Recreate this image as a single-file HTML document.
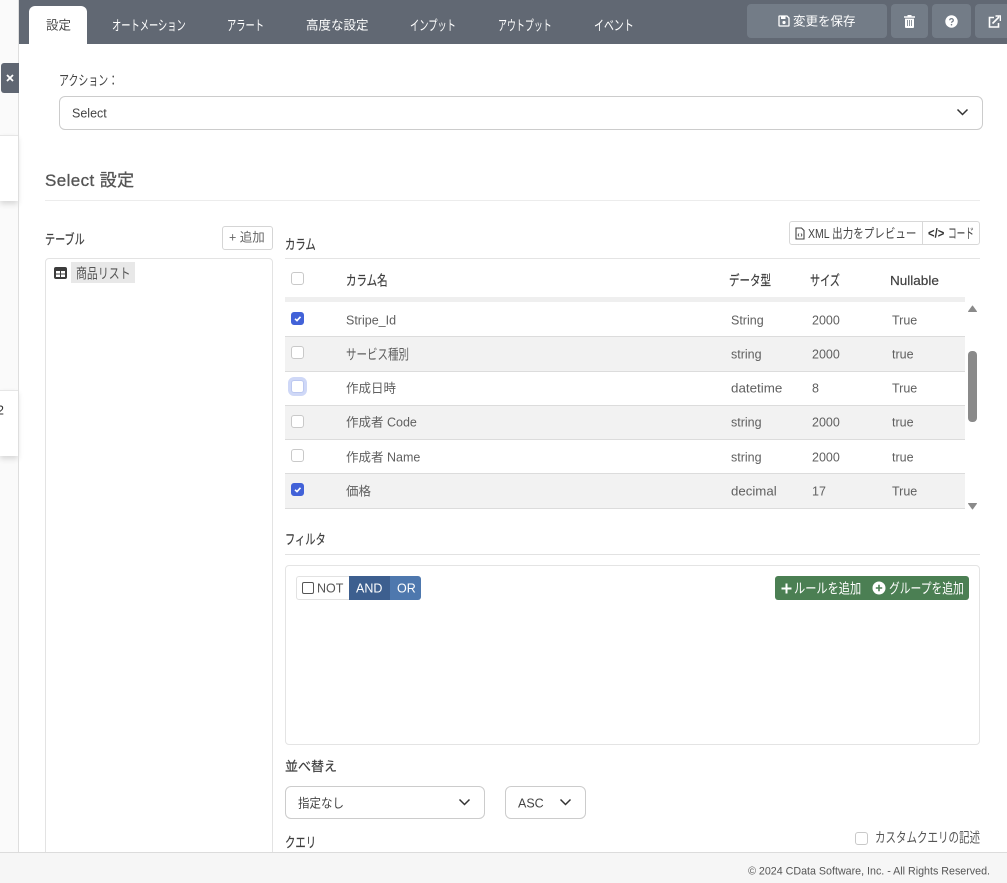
<!DOCTYPE html>
<html lang="ja"><head><meta charset="utf-8"><title>設定</title>
<style>
html,body{margin:0;padding:0;width:1007px;height:883px;overflow:hidden;background:#fff}
body{position:relative;font-family:"Liberation Sans","Noto Sans CJK JP",sans-serif;font-size:12.5px;color:#4a4a4a}
.a{position:absolute;box-sizing:border-box}
.t{position:absolute;white-space:nowrap;transform:translateY(calc(-50% + 1px)) scaleX(var(--s,1));transform-origin:0 50%;line-height:1.2}
.k{font-size:14px}
.tab{color:#fff;top:25px}
.cb{position:absolute;left:291px;width:13px;height:13px;box-sizing:border-box;border:1px solid #c9c9c9;border-radius:3px;background:#fff}
.cb.on{background:#4262d8;border-color:#4262d8}
.cb.on svg{position:absolute;left:0;top:0}
.row{position:absolute;left:285px;width:680px;box-sizing:border-box;border-bottom:1px solid #dcdcdc}
.g{background:#f2f2f2}
.sel{position:absolute;box-sizing:border-box;border:1px solid #ccc;border-radius:6px;background:#fff}
.h{color:#3f3f3f;-webkit-text-stroke:.2px #3f3f3f}
.d{color:#606060}
</style></head><body>
<!-- left strip -->
<div class="a" style="left:0;top:0;width:18px;height:883px;background:#fafafa"></div>
<div class="a" style="left:0;top:135px;width:18px;height:66px;background:#fff;box-shadow:0 3px 6px rgba(0,0,0,.14)"></div>
<div class="a" style="left:0;top:390px;width:18px;height:66px;background:#fff;box-shadow:0 3px 6px rgba(0,0,0,.14)"></div>
<div class="a" style="left:0;top:135px;width:18px;height:1px;background:#e6e6e6"></div>
<div class="a" style="left:0;top:390px;width:18px;height:1px;background:#e6e6e6"></div>
<span class="t" style="left:-3px;top:410px;color:#333">2</span>
<div class="a" style="left:18px;top:0;width:1px;height:883px;background:#dedede"></div>
<div class="a" style="left:1px;top:63px;width:18px;height:30px;background:#5f6672;border-radius:3px 0 0 3px"></div>
<svg class="a" style="left:6px;top:74px" width="8" height="8" viewBox="0 0 8 8"><path d="M1 1L7 7M7 1L1 7" stroke="#fff" stroke-width="1.800"/></svg>

<!-- top bar -->
<div class="a" style="left:19px;top:0;width:988px;height:44px;background:#616873"></div>
<div class="a" style="left:29px;top:6px;width:58px;height:38px;background:#fff;border-radius:6px 6px 0 0"></div>
<span class="t tab" style="left:46px;color:#4a4a4a">設定</span>
<span class="t tab k" style="left:112px;--s:.66">オートメーション</span>
<span class="t tab k" style="left:227px;--s:.66">アラート</span>
<span class="t tab" style="left:306px">高度な設定</span>
<span class="t tab k" style="left:410px;--s:.66">インプット</span>
<span class="t tab k" style="left:498px;--s:.64">アウトプット</span>
<span class="t tab k" style="left:594px;--s:.71">イベント</span>

<div class="a" style="left:747px;top:4px;width:140px;height:34px;background:#737c87;border-radius:4px"></div>
<div class="a" style="left:891px;top:4px;width:37px;height:34px;background:#737c87;border-radius:4px"></div>
<div class="a" style="left:932px;top:4px;width:39px;height:34px;background:#737c87;border-radius:4px"></div>
<div class="a" style="left:975px;top:4px;width:40px;height:34px;background:#737c87;border-radius:4px"></div>
<svg class="a" style="left:778px;top:15px" width="12" height="12" viewBox="0 0 12 12"><path d="M1.500 1h7.500l2 2v7.500a.5.5 0 0 1-.5.5h-9a.5.5 0 0 1-.5-.5V1.500A.5.5 0 0 1 1.500 1z" fill="none" stroke="#fff" stroke-width="1.300"/><rect x="3" y="1.500" width="4.500" height="2.500" fill="#fff"/><circle cx="6" cy="7.500" r="1.600" fill="#fff"/></svg>
<span class="t" style="left:793px;top:21px;color:#fff">変更を保存</span>
<svg class="a" style="left:903px;top:14px" width="13" height="14" viewBox="0 0 13 14"><path d="M1 2.200h11v1.600H1zM4.500 2.200V1h4v1.200" fill="#fff"/><path d="M2 4.600h9V13a1 1 0 0 1-1 1H3a1 1 0 0 1-1-1z" fill="#fff"/><path d="M4.500 6v6M6.500 6v6M8.500 6v6" stroke="#737c87" stroke-width=".8"/></svg>
<svg class="a" style="left:945px;top:15px" width="13" height="13" viewBox="0 0 13 13"><circle cx="6.500" cy="6.500" r="6.200" fill="#fff"/><path d="M4.700 5.200a1.800 1.600 0 1 1 2.700 1.400c-.6.4-.9.6-.9 1.200" fill="none" stroke="#737c87" stroke-width="1.300"/><circle cx="6.500" cy="9.700" r=".8" fill="#737c87"/></svg>
<svg class="a" style="left:988px;top:15px" width="13" height="13" viewBox="0 0 13 13"><path d="M6 2.500H1.500v9.500h9V8" fill="none" stroke="#fff" stroke-width="1.600"/><path d="M4.500 8.500L11 2M7.500 1h5v5" fill="none" stroke="#fff" stroke-width="1.600"/></svg>

<!-- action -->
<span class="t k" style="left:59px;top:80px;color:#444;--s:.71">アクション：</span>
<div class="sel" style="left:59px;top:96px;width:924px;height:34px"></div>
<span class="t" style="left:72px;top:113px;color:#444">Select</span>
<svg class="a" style="left:956px;top:108px" width="13" height="9" viewBox="0 0 13 9"><path d="M1.500 1.500L6.500 6.500L11.500 1.500" fill="none" stroke="#333" stroke-width="1.500"/></svg>

<span class="t" style="left:45px;top:180px;font-size:17px;color:#555;letter-spacing:.4px;-webkit-text-stroke:.3px #555">Select 設定</span>
<div class="a" style="left:45px;top:200px;width:935px;height:1px;background:#ececec"></div>

<!-- table panel -->
<span class="t h k" style="left:45px;top:239px;--s:.72">テーブル</span>
<div class="a" style="left:222px;top:226px;width:51px;height:24px;border:1px solid #d5d5d5;border-radius:3px;background:#fff"></div>
<span class="t" style="left:229px;top:237px;color:#666">+ 追加</span>
<div class="a" style="left:45px;top:258px;width:228px;height:640px;border:1px solid #e3e3e3;border-radius:4px;background:#fff"></div>
<svg class="a" style="left:54px;top:267px" width="13" height="12" viewBox="0 0 13 12"><rect width="13" height="12" rx="2" fill="#3c3c3c"/><path d="M2 4h4v2.500H2zM7 4h4v2.500H7zM2 7.500h4V10H2zM7 7.500h4V10H7z" fill="#fff"/></svg>
<div class="a" style="left:71px;top:262px;width:64px;height:21px;background:#e8e8e8"></div>
<span class="t k" style="left:76px;top:273px;color:#555;--s:.78">商品リスト</span>

<!-- columns -->
<span class="t h k" style="left:285px;top:244px;--s:.74">カラム</span>
<div class="a" style="left:789px;top:221px;width:191px;height:24px;border:1px solid #d8d8d8;border-radius:3px;background:#fff"></div>
<div class="a" style="left:922px;top:222px;width:1px;height:22px;background:#d8d8d8"></div>
<svg class="a" style="left:795px;top:227px" width="10" height="13" viewBox="0 0 10 13"><path d="M1 1h5.500L9 3.500V12H1z" fill="none" stroke="#444" stroke-width="1.100"/><path d="M4 6.500L3 8l1 1.500M6 6.500L7 8l-1 1.500" fill="none" stroke="#444" stroke-width=".8"/></svg>
<span class="t" style="left:808px;top:233px;color:#444;font-size:13px;--s:.81">XML 出力をプレビュー</span>
<span class="t" style="left:928px;top:233px;color:#333;font-weight:bold;--s:.9">&lt;/&gt;</span>
<span class="t k" style="left:948px;top:233px;color:#444;--s:.62">コード</span>
<div class="a" style="left:285px;top:258px;width:695px;height:1px;background:#e4e4e4"></div>

<div class="cb" style="top:272px"></div>
<span class="t h k" style="left:346px;top:280px;--s:.75">カラム名</span>
<span class="t h k" style="left:729px;top:280px;--s:.75">データ型</span>
<span class="t h k" style="left:810px;top:280px;--s:.72">サイズ</span>
<span class="t h" style="left:890px;top:280px;font-size:13px;--s:1.04">Nullable</span>
<div class="a" style="left:285px;top:297px;width:680px;height:5px;background:#efefef"></div>

<div class="row" style="top:302px;height:35px"></div>
<div class="row g" style="top:337px;height:35px"></div>
<div class="row" style="top:372px;height:34px"></div>
<div class="row g" style="top:406px;height:34px"></div>
<div class="row" style="top:440px;height:34px"></div>
<div class="row g" style="top:474px;height:35px"></div>

<div class="cb on" style="top:312px"><svg width="11" height="11" viewBox="0 0 11 11"><path d="M3 5.800L5 7.600L8.500 3.800" fill="none" stroke="#fff" stroke-width="1.600"/></svg></div>
<div class="cb" style="top:346px"></div>
<div class="cb" style="top:380px;box-shadow:0 0 0 3px #cfd8f7;border-color:#bcc8f0"></div>
<div class="cb" style="top:415px"></div>
<div class="cb" style="top:449px"></div>
<div class="cb on" style="top:483px"><svg width="11" height="11" viewBox="0 0 11 11"><path d="M3 5.800L5 7.600L8.500 3.800" fill="none" stroke="#fff" stroke-width="1.600"/></svg></div>

<span class="t d" style="left:346px;top:320px">Stripe_Id</span><span class="t d" style="left:731px;top:320px">String</span><span class="t d" style="left:812px;top:320px">2000</span><span class="t d" style="left:892px;top:320px">True</span>
<span class="t d k" style="left:346px;top:354px;--s:.75">サービス種別</span><span class="t d" style="left:731px;top:354px">string</span><span class="t d" style="left:812px;top:354px">2000</span><span class="t d" style="left:892px;top:354px">true</span>
<span class="t d" style="left:346px;top:388px">作成日時</span><span class="t d" style="left:731px;top:388px;--s:1.07">datetime</span><span class="t d" style="left:812px;top:388px">8</span><span class="t d" style="left:892px;top:388px">True</span>
<span class="t d" style="left:346px;top:422px">作成者 Code</span><span class="t d" style="left:731px;top:422px">string</span><span class="t d" style="left:812px;top:422px">2000</span><span class="t d" style="left:892px;top:422px">true</span>
<span class="t d" style="left:346px;top:457px">作成者 Name</span><span class="t d" style="left:731px;top:457px">string</span><span class="t d" style="left:812px;top:457px">2000</span><span class="t d" style="left:892px;top:457px">true</span>
<span class="t d" style="left:346px;top:491px">価格</span><span class="t d" style="left:731px;top:491px;--s:1.06">decimal</span><span class="t d" style="left:812px;top:491px">17</span><span class="t d" style="left:892px;top:491px">True</span>

<!-- scrollbar -->
<svg class="a" style="left:968px;top:305px" width="9" height="7" viewBox="0 0 9 7"><path d="M4.500 1L8.500 6.500H.5z" fill="#8a8a8a" stroke="#8a8a8a" stroke-linejoin="round"/></svg>
<div class="a" style="left:968px;top:351px;width:9px;height:71px;background:#8a8a8a;border-radius:4px"></div>
<svg class="a" style="left:968px;top:503px" width="9" height="7" viewBox="0 0 9 7"><path d="M.5.5H8.500L4.500 6z" fill="#8a8a8a" stroke="#8a8a8a" stroke-linejoin="round"/></svg>

<!-- filter -->
<span class="t h k" style="left:285px;top:539px;--s:.73">フィルタ</span>
<div class="a" style="left:285px;top:554px;width:695px;height:1px;background:#e2e2e2"></div>
<div class="a" style="left:285px;top:565px;width:695px;height:180px;border:1px solid #e4e4e4;border-radius:4px;background:#fff"></div>
<div class="a" style="left:296px;top:576px;width:54px;height:24px;border:1px solid #e2e2e2;border-radius:3px 0 0 3px;background:#fff"></div>
<div class="a" style="left:302px;top:582px;width:12px;height:12px;border:1.300px solid #555;border-radius:2px"></div>
<span class="t" style="left:317px;top:588px;color:#555">NOT</span>
<div class="a" style="left:349px;top:576px;width:41px;height:24px;background:#3d5f8f"></div>
<span class="t" style="left:356px;top:588px;color:#fff">AND</span>
<div class="a" style="left:390px;top:576px;width:31px;height:24px;background:#4e78ae;border-radius:0 3px 3px 0"></div>
<span class="t" style="left:397px;top:588px;color:#fff">OR</span>
<div class="a" style="left:775px;top:576px;width:194px;height:24px;background:#4b7f53;border-radius:3px"></div>
<svg class="a" style="left:781px;top:583px" width="11" height="11" viewBox="0 0 11 11"><path d="M5.500 0.500v10M0.500 5.500h10" stroke="#fff" stroke-width="2"/></svg>
<span class="t k" style="left:794px;top:588px;color:#fff;--s:.8">ルールを追加</span>
<svg class="a" style="left:872px;top:581px" width="14" height="14" viewBox="0 0 14 14"><circle cx="7" cy="7" r="6.500" fill="#fff"/><path d="M7 3.800v6.400M3.800 7h6.400" stroke="#4b7f53" stroke-width="1.600"/></svg>
<span class="t k" style="left:889px;top:588px;color:#fff;--s:.77">グループを追加</span>

<!-- sort -->
<span class="t h" style="left:285px;top:766px;font-size:13px">並べ替え</span>
<div class="sel" style="left:285px;top:786px;width:200px;height:33px"></div>
<span class="t" style="left:298px;top:803px;color:#444;--s:.92">指定なし</span>
<svg class="a" style="left:458px;top:798px" width="13" height="9" viewBox="0 0 13 9"><path d="M1.500 1.500L6.500 6.500L11.500 1.500" fill="none" stroke="#333" stroke-width="1.500"/></svg>
<div class="sel" style="left:505px;top:786px;width:81px;height:33px"></div>
<span class="t" style="left:518px;top:803px;color:#444">ASC</span>
<svg class="a" style="left:559px;top:798px" width="13" height="9" viewBox="0 0 13 9"><path d="M1.500 1.500L6.500 6.500L11.500 1.500" fill="none" stroke="#333" stroke-width="1.500"/></svg>

<span class="t h k" style="left:285px;top:842px;--s:.74">クエリ</span>
<div class="cb" style="left:855px;top:832px"></div>
<span class="t k" style="left:875px;top:837px;color:#555;--s:.75">カスタムクエリの記述</span>

<!-- footer -->
<div class="a" style="left:0;top:852px;width:1007px;height:31px;background:#f6f6f6;border-top:1px solid #dcdcdc"></div>
<span class="t" style="right:17px;top:871px;font-size:10.7px;color:#555">© 2024 CData Software, Inc. - All Rights Reserved.</span>
</body></html>
